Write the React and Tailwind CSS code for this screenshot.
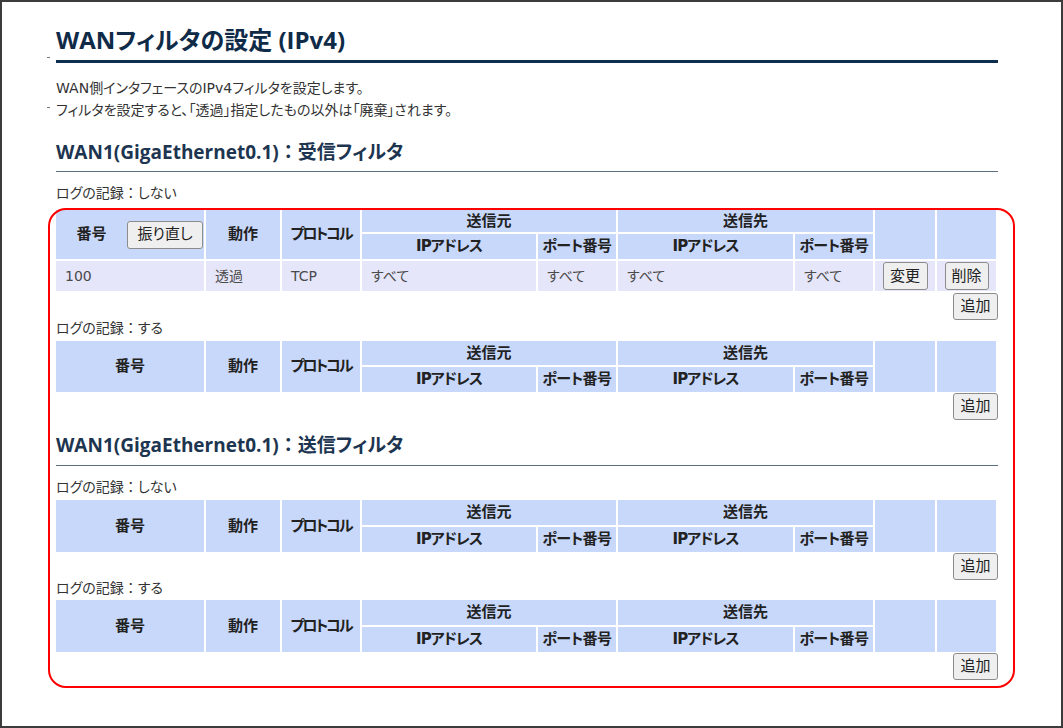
import React from "react";

const FONT = "font-['DejaVu_Sans','Noto_Sans_CJK_JP',sans-serif]";
const HFONT = "font-['Open_Sans','Noto_Sans_CJK_JP',sans-serif]";
const PALT = "[font-feature-settings:'palt']";

const HC =
  "bg-[#c8d8fb] text-[#222] font-bold text-[15px] flex items-center justify-center";
const DC = "bg-[#e6e6fa] text-[#4a4a4a] text-[14px] flex items-center";
const BTN =
  "px-[6px] border border-[#8c8c8c] rounded-[3px] bg-[#efefef] text-[15px] leading-none text-[#222] flex items-center justify-center";

function Colon() {
  return <span className="[font-feature-settings:normal]">：</span>;
}

function Header({ renumber }) {
  return (
    <>
      <div className={HC + " row-span-2"}>
        {renumber ? (
          <div className="flex w-full items-center">
            <span className="flex-1 text-center">番号</span>
            <button className={BTN + " h-[28px] font-normal mr-[1px] w-[76px]"}>振り直し</button>
          </div>
        ) : (
          "番号"
        )}
      </div>
      <div className={HC + " row-span-2"}>動作</div>
      <div className={HC + " row-span-2"}>
        <span className="tracking-[-2px]">プロトコル</span>
      </div>
      <div className={HC + " col-span-2"}>送信元</div>
      <div className={HC + " col-span-2"}>送信先</div>
      <div className={HC + " row-span-2"}></div>
      <div className={HC + " row-span-2"}></div>
      <div className={HC}>
        <span className="tracking-[-1px]">IPアドレス</span>
      </div>
      <div className={HC}>
        <span className="tracking-[-0.5px]">ポート番号</span>
      </div>
      <div className={HC}>
        <span className="tracking-[-1px]">IPアドレス</span>
      </div>
      <div className={HC}>
        <span className="tracking-[-0.5px]">ポート番号</span>
      </div>
    </>
  );
}

const COLS =
  "grid grid-cols-[148px_74px_78px_174px_78px_175px_78px_60px_59px] gap-[2px]";

function AddBtn({ mt }) {
  return (
    <div className={"flex justify-end " + mt}>
      <button className={BTN + " h-[27px] w-[45px]"}>追加</button>
    </div>
  );
}

export default function App() {
  return (
    <div
      className={
        "relative w-[1063px] h-[728px] border-2 border-[#3c3c3c] bg-white overflow-hidden " +
        FONT +
        " " +
        PALT
      }
    >
      <div className="pl-[54px] pr-[63px] pt-[23px]">
        <div
          className={
            "text-[24px] leading-[30px] font-bold text-[#102b48] pb-[5px] border-b-[3px] border-[#0f2d4f] " +
            HFONT
          }
        >
          WANフィルタの設定 (IPv4)
        </div>
        <div className="mt-[14px] text-[14px] leading-[22px] text-[#333]">
          <div>WAN側インタフェースのIPv4フィルタを設定します。</div>
          <div>フィルタを設定すると、「透過」指定したもの以外は「廃棄」されます。</div>
        </div>

        <div
          className={
            "mt-[19px] text-[19px] leading-[24px] font-bold text-[#1d3550] pb-[7px] border-b border-[#5c6f80] " +
            HFONT
          }
        >
          WAN1(GigaEthernet0.1)<Colon />受信フィルタ
        </div>
        <div className="mt-[11px] text-[14px] leading-[20px] text-[#333]">
          ログの記録<Colon />しない
        </div>
        <div className={COLS + " mt-[7px] grid-rows-[22px_25px_30px]"}>
          <Header renumber />
          <div className={DC + " pl-[9px]"}>100</div>
          <div className={DC + " pl-[9px]"}>透過</div>
          <div className={DC + " pl-[9px]"}>TCP</div>
          <div className={DC + " pl-[9px]"}>すべて</div>
          <div className={DC + " pl-[9px]"}>すべて</div>
          <div className={DC + " pl-[9px]"}>すべて</div>
          <div className={DC + " pl-[9px]"}>すべて</div>
          <div className={DC + " justify-center"}>
            <button className={BTN + " h-[28px] w-[45px]"}>変更</button>
          </div>
          <div className={DC + " justify-center"}>
            <button className={BTN + " h-[28px] w-[44px]"}>削除</button>
          </div>
        </div>
        <AddBtn mt="mt-[2px]" />
        <div className="text-[14px] leading-[16px] h-[16px] text-[#333]">
          ログの記録<Colon />する
        </div>
        <div className={COLS + " mt-[5px] grid-rows-[24px_25px]"}>
          <Header />
        </div>
        <AddBtn mt="mt-[1px]" />

        <div
          className={
            "mt-[13px] text-[19px] leading-[24px] font-bold text-[#1d3550] pb-[8px] border-b border-[#5c6f80] " +
            HFONT
          }
        >
          WAN1(GigaEthernet0.1)<Colon />送信フィルタ
        </div>
        <div className="mt-[11px] text-[14px] leading-[20px] text-[#333]">
          ログの記録<Colon />しない
        </div>
        <div className={COLS + " mt-[3px] grid-rows-[25px_25px]"}>
          <Header />
        </div>
        <AddBtn mt="mt-[1px]" />
        <div className="text-[14px] leading-[14px] h-[14px] text-[#333] mt-[1px]">
          ログの記録<Colon />する
        </div>
        <div className={COLS + " mt-[5px] grid-rows-[25px_25px]"}>
          <Header />
        </div>
        <AddBtn mt="mt-[1px]" />
      </div>

      <div className="absolute left-[45px] top-[55px] w-[3px] h-[1px] bg-[#777]"></div>
      <div className="absolute left-[45px] top-[105px] w-[3px] h-[1px] bg-[#777]"></div>
      <div className="pointer-events-none absolute left-[46px] top-[206px] w-[967px] h-[480px] border-2 border-[#ff0000] rounded-[18px]"></div>
    </div>
  );
}
